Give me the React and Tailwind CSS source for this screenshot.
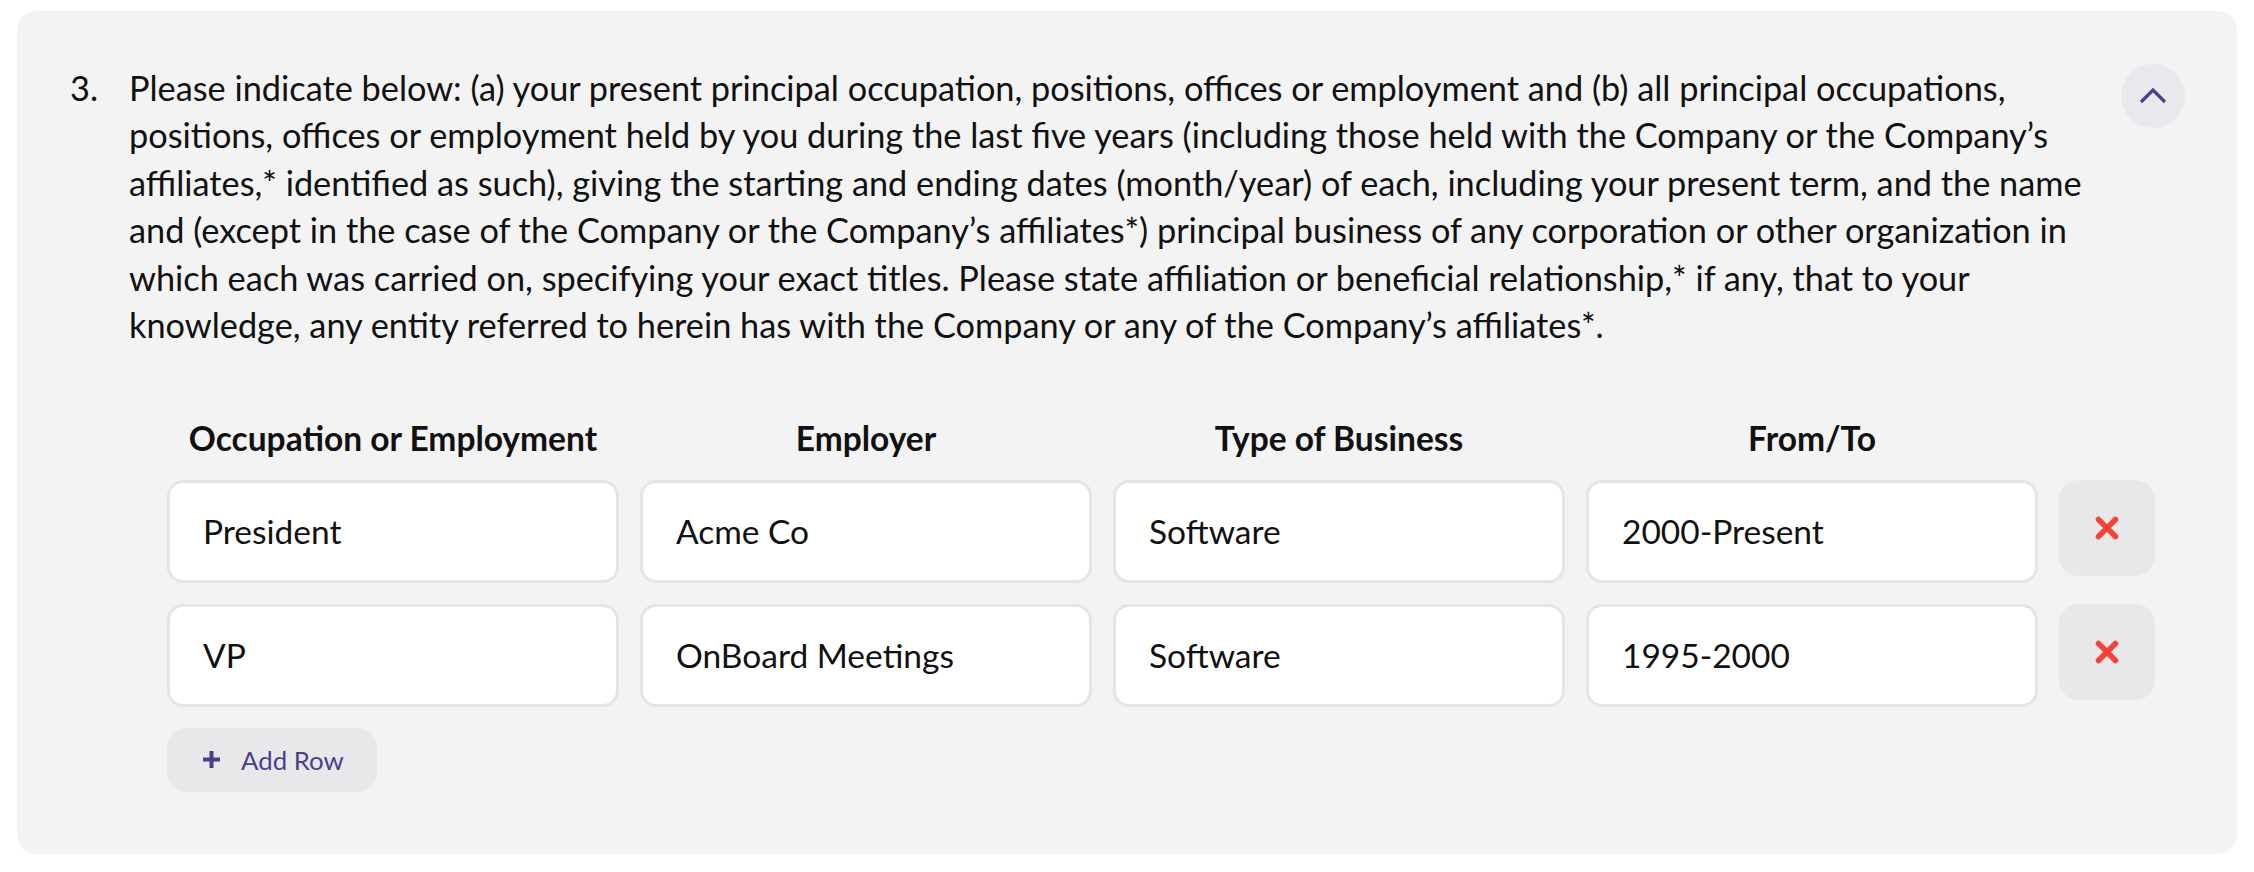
import { useState } from "react";

const initialRows = [
  { occupation: "President", employer: "Acme Co", business: "Software", period: "2000-Present" },
  { occupation: "VP", employer: "OnBoard Meetings", business: "Software", period: "1995-2000" },
];

const columns = ["Occupation or Employment", "Employer", "Type of Business", "From/To"];
const fields = ["occupation", "employer", "business", "period"];

function XIcon() {
  return (
    <svg width="24" height="24" viewBox="0 0 24 24" fill="none">
      <path d="M3.5 3.5 20.5 20.5M20.5 3.5 3.5 20.5" stroke="#f44336" strokeWidth="5.5" strokeLinecap="round" />
    </svg>
  );
}

export default function App() {
  const [rows, setRows] = useState(initialRows);

  const updateCell = (i, key, value) => {
    setRows((prev) => prev.map((r, idx) => (idx === i ? { ...r, [key]: value } : r)));
  };

  const removeRow = (i) => setRows((prev) => prev.filter((_, idx) => idx !== i));

  const addRow = () =>
    setRows((prev) => [...prev, { occupation: "", employer: "", business: "", period: "" }]);

  return (
    <div className="min-h-screen bg-white px-[17px] pt-[11px] pb-[17px] font-['Lato',sans-serif] text-[#111]">
      <div className="rounded-[20px] bg-[#f3f3f3] pl-[53px] pr-[52px] pt-[53px] pb-[62px]">
        <div className="flex items-start text-[34.3px] leading-[47.4px]">
          <span className="w-[59px] shrink-0">3.</span>
          <p className="flex-1">
            Please indicate below: (a) your present principal occupation, positions, offices or employment and (b) all
            principal occupations, positions, offices or employment held by you during the last five years (including
            those held with the Company or the Company’s affiliates,* identified as such), giving the starting and
            ending dates (month/year) of each, including your present term, and the name and (except in the case of
            the Company or the Company’s affiliates*) principal business of any corporation or other organization in
            which each was carried on, specifying your exact titles. Please state affiliation or beneficial
            relationship,* if any, that to your knowledge, any entity referred to herein has with the Company or any of
            the Company’s affiliates*.
          </p>
          <button className="ml-[24px] flex size-[64px] shrink-0 items-center justify-center rounded-full bg-[#e9e8ed]">
            <svg width="28" height="18" viewBox="0 0 28 18" fill="none">
              <path d="M2 15 14 3l12 12" stroke="#4b3f8c" strokeWidth="3.2" />
            </svg>
          </button>
        </div>

        <div className="ml-[97px] mt-[67px]">
          <div className="grid grid-cols-[452px_452px_452px_452px_96px] gap-x-[21px]">
            {columns.map((c) => (
              <div key={c} className="text-center text-[33.5px] font-bold leading-[47.4px]">
                {c}
              </div>
            ))}
            <div />
          </div>

          <div className="mt-[17px] flex flex-col gap-[21px]">
            {rows.map((row, i) => (
              <div key={i} className="grid grid-cols-[452px_452px_452px_452px_96px] items-start gap-x-[21px]">
                {fields.map((f) => (
                  <input
                    key={f}
                    value={row[f]}
                    onChange={(e) => updateCell(i, f, e.target.value)}
                    className="h-[103px] w-full rounded-[16px] border-[3.5px] border-[#e4e4e9] bg-white pl-[33px] text-[33.5px] text-[#111] outline-none"
                  />
                ))}
                <button
                  onClick={() => removeRow(i)}
                  className="flex size-[96px] items-center justify-center rounded-[20px] bg-[#e8e8ea]"
                >
                  <XIcon />
                </button>
              </div>
            ))}
          </div>

          <button
            onClick={addRow}
            className="mt-[21px] flex h-[64px] w-[210px] items-center gap-[21px] rounded-[20px] bg-[#e8e8eb] pl-[36px] text-[25.8px] text-[#4b3f8c]"
          >
            <svg width="17" height="17" viewBox="0 0 17 17" fill="none">
              <path d="M8.5 0v17M0 8.5h17" stroke="#4b3f8c" strokeWidth="4" />
            </svg>
            <span>Add Row</span>
          </button>
        </div>
      </div>
    </div>
  );
}
